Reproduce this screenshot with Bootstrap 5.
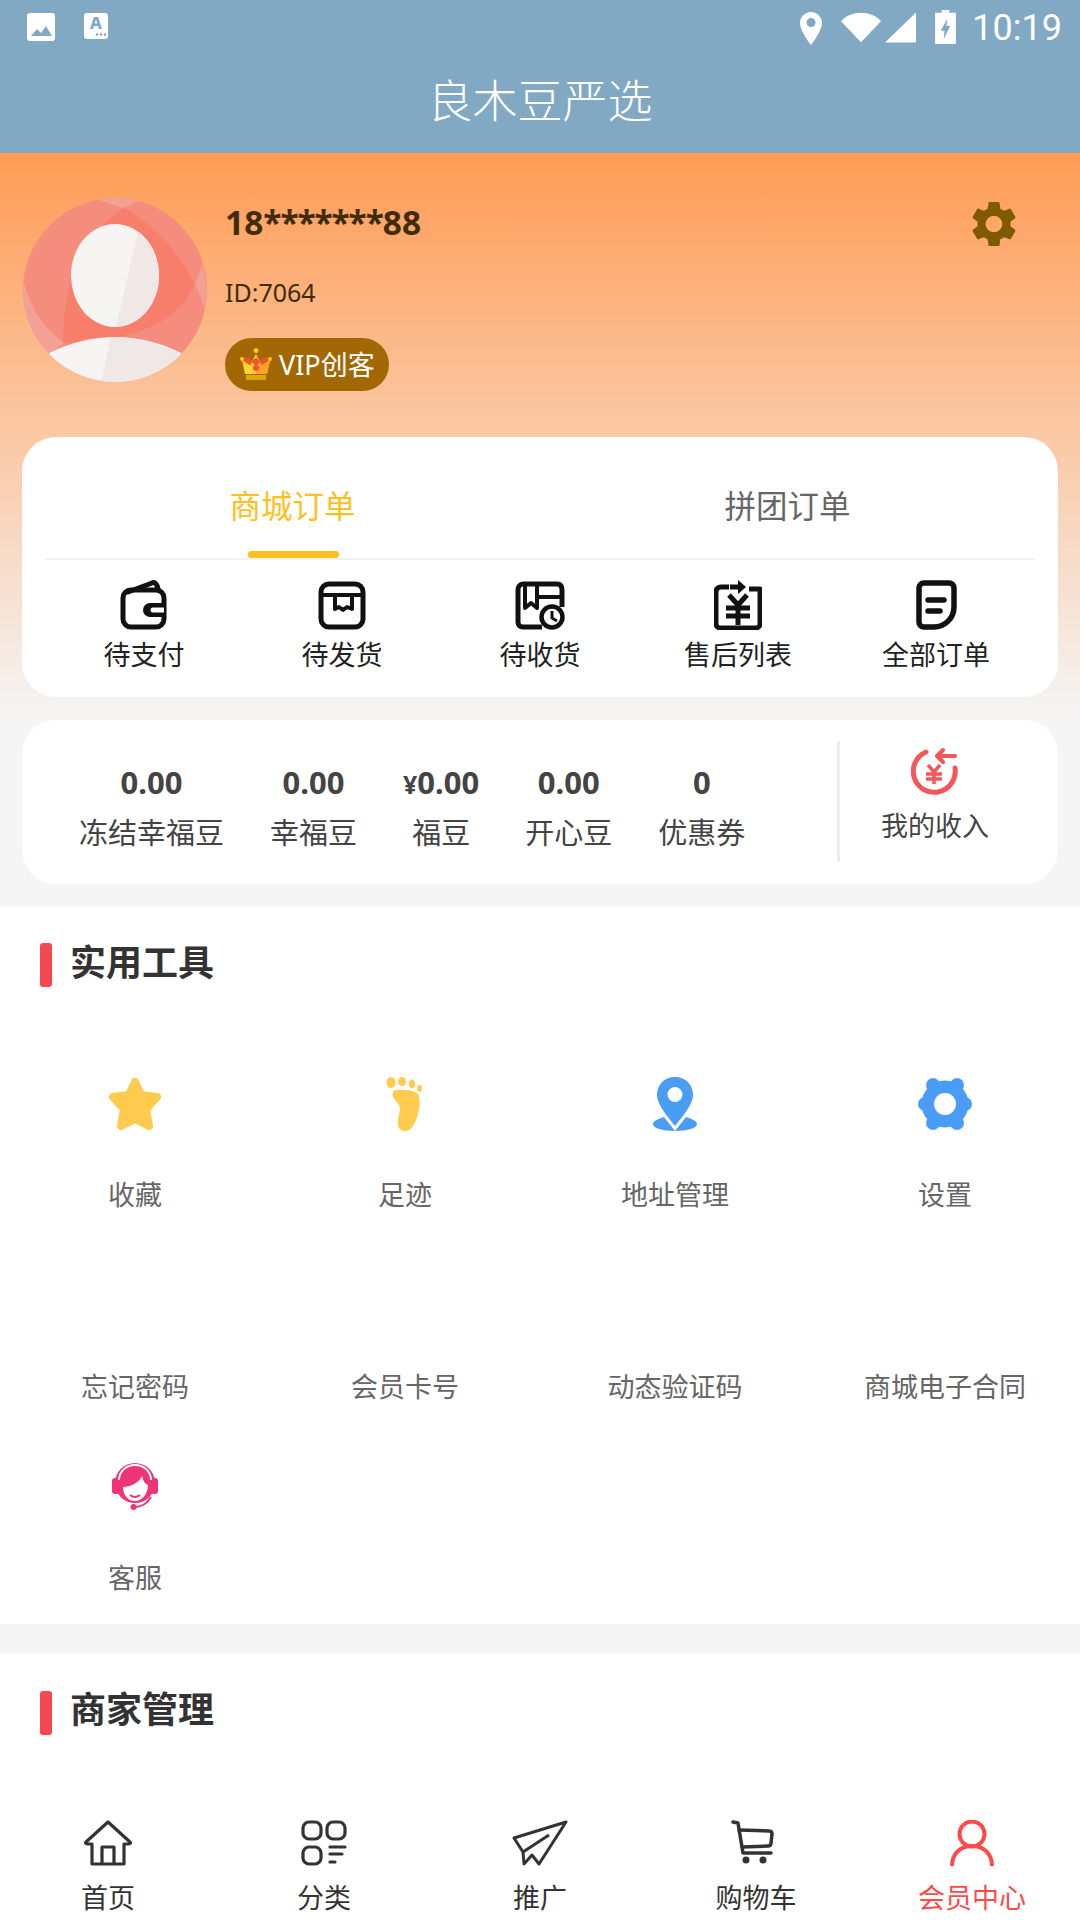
<!DOCTYPE html>
<html lang="zh">
<head>
<meta charset="utf-8">
<title>良木豆严选</title>
<link rel="stylesheet" href="https://cdn.jsdelivr.net/npm/bootstrap@5.3.0/dist/css/bootstrap.min.css">
<style>
body{font-family:"Noto Sans","Noto Sans CJK SC",sans-serif;background:#f5f5f5;color:#333;margin:0}
svg{display:block}
.app-frame{height:1920px;overflow:hidden}
.sys-bar{height:56px;background:#81a9c4;padding:12px 18px 0 27px;color:#fff}
.sys-left{gap:29px}
.sys-right{gap:19px}
.sys-pair{gap:4px}
.sys-time{font-family:Roboto,sans-serif;font-size:36px;line-height:36px;margin:-2px 0 0 -3px}
.sys-batt{margin-top:-2px}
.title-bar{height:97px;background:#81a9c4;color:#fff;font-size:45px;font-weight:300;padding-bottom:7px}
.hero-wrap{background:linear-gradient(180deg,#ff9c55 0,#f5f5f5 567px,#f5f5f5 100%);padding:45px 22px 23px}
.hero-row{margin-bottom:45px;height:194px}
.avatar-img{width:184px;height:184px;margin-left:1px;margin-right:18px}
.user-name{font-size:33.500px;font-weight:700;color:#3f2c08;line-height:48px}
.user-stars{letter-spacing:-1.100px}
.user-id{font-size:25px;color:#3f2c08;line-height:38px;margin-top:27px}
.vip-pill{height:53px;width:164px;border-radius:27px;background:#a16804;color:#fff;font-size:27px;line-height:53px;margin-top:27px;padding-left:15px;gap:7px}
.gear-top{margin:3px 41px 0 0}
.panel-white{background:#fff;border-radius:34px}
.order-panel{height:260px;padding:0 23px;margin-bottom:23px}
.tab-strip{height:123px;border-bottom:2px solid #f2f2f2}
.tab-item{font-size:31.500px;color:#666;position:relative;padding-top:16px}
.tab-on{color:#ffc01e}
.tab-on::after{content:"";position:absolute;left:50%;bottom:0;width:91px;height:7px;margin-left:-45px;background:#ffc01e;border-radius:3px}
.order-cell{font-size:27px;color:#222;line-height:36px;padding-top:20px}
.order-ico{height:50px;margin-bottom:7px}
.wallet-panel{height:164px;padding-left:57px}
.stat-list{gap:46px;width:760px;padding-top:10px}
.stat-val{font-size:31px;font-weight:700;color:#444;line-height:40px;height:40px;margin-bottom:11px}
.stat-yen{font-size:25px;line-height:1}
.stat-lab{font-size:29px;color:#444;line-height:40px}
.stat-sep{width:3px;height:120px;background:linear-gradient(90deg,#f7f7f7,#e4e4e4,#f7f7f7);margin-left:-2px}
.income-cell{font-size:27px;color:#444;line-height:36px;padding:0 28px 14px 0}
.income-cell svg{margin-bottom:13px}
.block-white{background:#fff}
.tools-block{padding:36px 0 24px;margin-bottom:29px}
.head-row{padding-left:40px;gap:18px;height:44px}
.head-bar{width:12px;height:44px;border-radius:3px;background:#f5484f}
.head-text{font-size:36px;font-weight:700;color:#333;padding-bottom:5px}
.tools-grid{margin-top:38px}
.tool-cell{height:191.500px;padding-top:50px;font-size:27px;color:#666}
.tool-ico{height:57px;margin-bottom:45px}
.tool-lab{line-height:36px}
.fill-white{flex:1 1 auto;min-height:0;background:#fff;padding-top:38px}
.tabbar{background:#fff;padding-top:45px;height:145px}
.tab-cell{font-size:27px;color:#333;line-height:36px}
.tab-cell svg{margin-bottom:14px}
.tab-cart svg{margin-right:9px}
.tab-live{color:#ff4a4a}
</style>
</head>
<body>
<div class="app-frame d-flex flex-column">

  <div class="sys-bar d-flex align-items-start justify-content-between flex-shrink-0">
    <div class="d-flex sys-left">
      <svg width="28" height="30" viewBox="0 0 28 30"><rect x="0" y="1" width="28" height="28" rx="3" fill="#fff"/><path d="M4 24l6-7 4 4 5-7 6 10z" fill="#81a9c4"/></svg>
      <svg width="24" height="27" viewBox="0 0 24 27"><rect x="0" y="1" width="24" height="26" rx="3" fill="#fff"/><path d="M6 17l4-12h4l4 12h-3l-1-3H10l-1 3zM10.800 11.500h2.400l-1.200-4z" fill="#81a9c4" fill-rule="evenodd"/><circle cx="13" cy="22.500" r="1.300" fill="#81a9c4"/><circle cx="17" cy="22.500" r="1.300" fill="#81a9c4"/><circle cx="21" cy="22.500" r="1.300" fill="#81a9c4"/></svg>
    </div>
    <div class="d-flex align-items-start sys-right">
      <svg width="22" height="33" viewBox="0 0 22 33"><path fill-rule="evenodd" d="M11 0C5 0 0 5 0 11c0 8 11 22 11 22s11-14 11-22C22 5 17 0 11 0zm0 15a4.500 4.500 0 1 1 0-9 4.500 4.500 0 0 1 0 9z" fill="#fff"/></svg>
      <div class="d-flex sys-pair">
        <svg width="40" height="31" viewBox="0 0 42 31"><path d="M0 9C5 3 13 0 21 0s16 3 21 9L21 31z" fill="#fff"/></svg>
        <svg width="31" height="31" viewBox="0 0 32 31"><path d="M32 0v31H0z" fill="#fff"/></svg>
      </div>
      <svg class="sys-batt" width="21" height="34" viewBox="0 0 22 36"><path fill-rule="evenodd" d="M7 0h8v3h7v33H0V3h7zM13 9l-7 13h4l-1 9 7-14h-4z" fill="#fff"/></svg>
      <div class="sys-time">10:19</div>
    </div>
  </div>

  <div class="title-bar d-flex align-items-center justify-content-center flex-shrink-0">良木豆严选</div>

  <div class="hero-wrap flex-shrink-0">
    <div class="hero-row d-flex">
      <svg class="avatar-img flex-shrink-0" viewBox="0 0 184 184">
        <defs><clipPath id="avClip"><circle cx="92" cy="92" r="92"/></clipPath></defs>
        <g clip-path="url(#avClip)">
          <rect width="184" height="184" fill="#f58d7e"/>
          <path d="M0 80Q10 125 42 145L20 160 0 140z" fill="#f3a196"/>
          <path d="M70 0L100 10 122 0z" fill="#f3a196"/>
          <path d="M172 87L180 66 184 90 184 125Q180 100 172 87z" fill="#f3a196"/>
          <path d="M100 10C130 25 158 55 172 87C155 120 125 142 40 145C40 95 52 45 100 10z" fill="#f87e6c"/>
          <ellipse cx="92" cy="77.500" rx="44" ry="51.500" fill="#f7f4f4"/>
          <path d="M115 33.500A44 51.500 0 0 1 92 129L93 129z" fill="#f0e8e7"/>
          <path d="M26 155Q92 123 158 155L170 184H14z" fill="#f7f4f4"/>
          <path d="M88 139Q130 140 158 155L170 184H78z" fill="#f0e8e7"/>
        </g>
      </svg>
      <div class="flex-grow-1">
        <div class="user-name">18<span class="user-stars">*******</span>88</div>
        <div class="user-id">ID:7064</div>
        <div class="vip-pill d-flex align-items-center">
          <svg width="32" height="33" viewBox="0 0 32 33" class="flex-shrink-0"><rect x="6" y="27" width="20" height="5" fill="#e0a800"/><path d="M5 26L2 12l8 5 6-11 6 11 8-5-3 14z" fill="#ffd22e"/><path d="M16 6l6 11 8-5-3 14H16z" fill="#ffa028"/><path d="M3 12c3-4 7-3 9 2l-2 3zM29 12c-3-4-7-3-9 2l2 3zM12 14c2-5 6-5 8 0l-4 4z" fill="#ef5230"/><circle cx="16" cy="20" r="3" fill="#ef5230"/><circle cx="16" cy="2.500" r="2.500" fill="#ffc61e"/><circle cx="2" cy="11" r="2" fill="#ffc61e"/><circle cx="30" cy="11" r="2" fill="#ffc61e"/></svg>
          <span>VIP创客</span>
        </div>
      </div>
      <svg class="gear-top flex-shrink-0" width="46" height="46" viewBox="2.500 2 19 20"><path fill="#7f5a00" d="M19.140 12.940c.04-.3.06-.61.06-.94 0-.32-.02-.64-.07-.94l2.030-1.580c.18-.14.23-.41.12-.61l-1.920-3.320c-.12-.22-.37-.29-.59-.22l-2.390.96c-.5-.38-1.030-.7-1.620-.94l-.36-2.540c-.04-.24-.24-.41-.48-.41h-3.840c-.24 0-.43.17-.47.41l-.36 2.540c-.59.24-1.130.57-1.620.94l-2.390-.96c-.22-.08-.47 0-.59.22L2.740 8.870c-.12.21-.08.47.12.61l2.030 1.580c-.05.3-.09.63-.09.94s.02.64.07.94l-2.030 1.580c-.18.14-.23.41-.12.61l1.920 3.320c.12.22.37.29.59.22l2.390-.96c.5.38 1.030.7 1.620.94l.36 2.540c.05.24.24.41.48.41h3.840c.24 0 .44-.17.47-.41l.36-2.540c.59-.24 1.130-.56 1.620-.94l2.390.96c.22.08.47 0 .59-.22l1.920-3.320c.12-.22.07-.47-.12-.61l-2.010-1.580zM12 15.600c-1.980 0-3.600-1.620-3.600-3.600s1.620-3.600 3.600-3.600 3.600 1.620 3.600 3.600-1.620 3.600-3.600 3.600z"/></svg>
    </div>

    <div class="panel-white order-panel">
      <div class="tab-strip row g-0">
        <div class="col-6 tab-item tab-on d-flex align-items-center justify-content-center">商城订单</div>
        <div class="col-6 tab-item d-flex align-items-center justify-content-center">拼团订单</div>
      </div>
      <div class="d-flex">
        <div class="order-cell flex-fill w-100 d-flex flex-column align-items-center">
          <svg class="order-ico" width="48" height="50" viewBox="0 0 48 50" fill="none" stroke="#111" stroke-width="5" stroke-linejoin="round"><path d="M8 12L32 3c2-1 5 0 6 6" stroke-linecap="round"/><rect x="3" y="10" width="41" height="37" rx="8"/><path d="M44 24H30a6 6 0 0 0 0 12h14z" fill="#111" stroke-width="2"/><path d="M44 27.500H33a2.500 2.500 0 0 0 0 5h11z" fill="#fff" stroke="none"/></svg>
          <span>待支付</span>
        </div>
        <div class="order-cell flex-fill w-100 d-flex flex-column align-items-center">
          <svg class="order-ico" width="48" height="50" viewBox="0 0 48 50" fill="none" stroke="#111" stroke-width="5" stroke-linejoin="round" stroke-linecap="round"><rect x="3" y="4" width="42" height="43" rx="8"/><path d="M3 15h11M45 15H34M14 15h20v14l-5-2-4 3-4-3-4 2V15z" stroke-width="4"/></svg>
          <span>待发货</span>
        </div>
        <div class="order-cell flex-fill w-100 d-flex flex-column align-items-center">
          <svg class="order-ico" width="50" height="50" viewBox="0 0 50 50" fill="none" stroke="#111" stroke-width="5" stroke-linejoin="round"><path d="M27 47H8c-3 0-5-2-5-5V10c0-3 2-6 5-6h34c3 0 5 2 5 6v17"/><path d="M10 4v24l6-5 6 5V4M22 17h25" stroke-width="4"/><circle cx="37" cy="37" r="10.500" stroke-width="4.500"/><path d="M37 31v7l5 3" stroke-width="3"/></svg>
          <span>待收货</span>
        </div>
        <div class="order-cell flex-fill w-100 d-flex flex-column align-items-center">
          <svg class="order-ico" width="48" height="50" viewBox="0 0 48 50" fill="none" stroke="#111" stroke-width="5" stroke-linejoin="round"><path d="M15 7H7C4 7 2 9 2 12v32c0 2 2 4 4 4h36c2 0 4-2 4-4V9H35"/><path d="M16 7h11" /><path d="M24 0l8 7-8 7z" fill="#111" stroke="none"/><path d="M15 15l9 10 9-10M12 28h24M12 36h24M24 25v20"/></svg>
          <span>售后列表</span>
        </div>
        <div class="order-cell flex-fill w-100 d-flex flex-column align-items-center">
          <svg class="order-ico" width="41" height="50" viewBox="0 0 41 50" fill="none" stroke="#111" stroke-width="5.500" stroke-linejoin="round" stroke-linecap="round"><path d="M8 3h25c3 0 5 2 5 5v19c0 11-9 20-20 20H8c-3 0-5-2-5-5V8c0-3 2-5 5-5z"/><path d="M12 20h16M12 31h12"/></svg>
          <span>全部订单</span>
        </div>
      </div>
    </div>

    <div class="panel-white wallet-panel d-flex align-items-center">
      <div class="stat-list d-flex text-center">
        <div><div class="stat-val">0.00</div><div class="stat-lab">冻结幸福豆</div></div>
        <div><div class="stat-val">0.00</div><div class="stat-lab">幸福豆</div></div>
        <div><div class="stat-val"><span class="stat-yen">¥</span>0.00</div><div class="stat-lab">福豆</div></div>
        <div><div class="stat-val">0.00</div><div class="stat-lab">开心豆</div></div>
        <div><div class="stat-val">0</div><div class="stat-lab">优惠券</div></div>
      </div>
      <div class="stat-sep flex-shrink-0"></div>
      <div class="income-cell flex-grow-1 d-flex flex-column align-items-center">
        <svg width="48" height="48" viewBox="0 0 48 48" fill="none" stroke="#f5565a" stroke-width="5" stroke-linecap="round"><path d="M15 5A21 21 0 1 0 44 21"/><path d="M27 9H44M32 3l-6 6 6 6" stroke-width="4" stroke-linejoin="round"/><path d="M17 18l6 7 6-7M15 27h16M15 32h16M23 25v12" stroke-width="3.500" stroke-linecap="butt"/></svg>
        <span>我的收入</span>
      </div>
    </div>
  </div>

  <div class="block-white tools-block flex-shrink-0">
    <div class="head-row d-flex align-items-center"><div class="head-bar"></div><div class="head-text">实用工具</div></div>
    <div class="tools-grid row g-0">
      <div class="col-3 tool-cell text-center"><div class="tool-ico d-flex justify-content-center align-items-center">
        <svg width="54" height="54" viewBox="0 0 54 54"><polygon points="27,5 33,18 49,20 38,32 41,49 27,42 13,49 16,32 5,20 21,18" fill="#ffcb4e" stroke="#ffcb4e" stroke-width="8" stroke-linejoin="round"/></svg></div><div class="tool-lab">收藏</div></div>
      <div class="col-3 tool-cell text-center"><div class="tool-ico d-flex justify-content-center align-items-center">
        <svg width="38" height="54" viewBox="0 0 38 54" fill="#ffcb4e"><ellipse cx="5" cy="5.500" rx="4.500" ry="5.500"/><ellipse cx="16" cy="4.500" rx="4" ry="4.500"/><ellipse cx="26" cy="7" rx="3" ry="4.500"/><ellipse cx="33.500" cy="11.500" rx="2.500" ry="3.500"/><path d="M10 13c7-1 16 0 21 3 4 4 3 16 0 24-2 6-5 14-12 14-6 0-8-5-7-11 1-6 3-11 1-15-3-4-8-9-6-12 0-2 1-3 3-3z"/></svg></div><div class="tool-lab">足迹</div></div>
      <div class="col-3 tool-cell text-center"><div class="tool-ico d-flex justify-content-center align-items-center">
        <svg width="44" height="54" viewBox="0 0 44 54"><path fill-rule="evenodd" fill="#4a9df5" d="M22 0C11 0 4 8 4 18c0 9 10 21 18 31 8-10 18-22 18-31C40 8 33 0 22 0zm0 25a7.500 7.500 0 1 1 0-15 7.500 7.500 0 0 1 0 15z"/><path fill="#4a9df5" d="M11 40C5 42 0 44 0 47c0 4 9 7 22 7s22-3 22-7c0-3-5-5-11-7l-11 14z"/></svg></div><div class="tool-lab">地址管理</div></div>
      <div class="col-3 tool-cell text-center"><div class="tool-ico d-flex justify-content-center align-items-center">
        <svg width="54" height="52" viewBox="0 0 54 52"><g fill="#4a9df5"><circle cx="27" cy="26" r="23.500"/><circle cx="15" cy="7" r="7"/><circle cx="39" cy="7" r="7"/><circle cx="7" cy="26" r="7"/><circle cx="47" cy="26" r="7"/><circle cx="15" cy="45" r="7"/><circle cx="39" cy="45" r="7"/></g><circle cx="27" cy="26" r="11" fill="#fff"/></svg></div><div class="tool-lab">设置</div></div>
      <div class="col-3 tool-cell text-center"><div class="tool-ico"></div><div class="tool-lab">忘记密码</div></div>
      <div class="col-3 tool-cell text-center"><div class="tool-ico"></div><div class="tool-lab">会员卡号</div></div>
      <div class="col-3 tool-cell text-center"><div class="tool-ico"></div><div class="tool-lab">动态验证码</div></div>
      <div class="col-3 tool-cell text-center"><div class="tool-ico"></div><div class="tool-lab">商城电子合同</div></div>
      <div class="col-3 tool-cell text-center"><div class="tool-ico d-flex justify-content-center align-items-center">
        <svg width="46" height="47" viewBox="0 0 46 47"><rect x="0" y="15" width="7" height="16" rx="3" fill="#ee3377"/><rect x="39" y="15" width="7" height="16" rx="3" fill="#ee3377"/><circle cx="23" cy="20" r="20" fill="#ee3377"/><path d="M7 17A16 15 0 0 1 39 17" fill="none" stroke="#fff" stroke-width="2"/><path d="M11 24C18 24 27 20 30 13C31 18 33 21 36 22C36 31 30 38 23 38C16 38 11 32 11 24z" fill="#fff"/><path d="M18 32Q23 36 28 32" fill="none" stroke="#ee3377" stroke-width="2"/><path d="M22 44c7 0 13-3 17-10" stroke="#ee3377" stroke-width="2" fill="none"/><circle cx="21.500" cy="44" r="3" fill="#ee3377"/></svg></div><div class="tool-lab">客服</div></div>
    </div>
  </div>

  <div class="fill-white">
    <div class="head-row d-flex align-items-center"><div class="head-bar"></div><div class="head-text">商家管理</div></div>
  </div>

  <div class="tabbar d-flex flex-shrink-0">
    <div class="tab-cell flex-fill w-100 d-flex flex-column align-items-center">
      <svg width="48" height="46" viewBox="0 0 48 46" fill="none" stroke="#333" stroke-width="3.200" stroke-linejoin="round"><path d="M8 24H4c-2 0-3-1-2-2L24 2l22 20c1 1 0 2-2 2h-4v20H8z"/><path d="M18 44V27h12v17"/></svg>
      <span>首页</span></div>
    <div class="tab-cell flex-fill w-100 d-flex flex-column align-items-center">
      <svg width="46" height="46" viewBox="0 0 46 46" fill="none" stroke="#333" stroke-width="3.200" stroke-linecap="round"><rect x="2" y="2" width="18" height="17" rx="6"/><rect x="26" y="2" width="18" height="17" rx="6"/><rect x="2" y="27" width="18" height="17" rx="6"/><path d="M29 27H44M29 34H41M29 42H34"/></svg>
      <span>分类</span></div>
    <div class="tab-cell flex-fill w-100 d-flex flex-column align-items-center">
      <svg width="56" height="46" viewBox="0 0 56 46" fill="none" stroke="#333" stroke-width="3" stroke-linejoin="round"><path d="M54 2L2 18l9 14 1 12 8-9 7 9z"/><path d="M37 15L11 32"/></svg>
      <span>推广</span></div>
    <div class="tab-cell tab-cart flex-fill w-100 d-flex flex-column align-items-center">
      <svg width="44" height="46" viewBox="0 0 44 46" fill="none" stroke="#333" stroke-width="3.500" stroke-linecap="round" stroke-linejoin="round"><path d="M3 2l5 1 5 30h28"/><path d="M9 10l30 1c2 0 3 1 3 3l-1 9c0 2-1 3-3 3l-26 1"/><circle cx="16" cy="40" r="3.500" fill="#333" stroke="none"/><circle cx="33" cy="40" r="3.500" fill="#333" stroke="none"/></svg>
      <span>购物车</span></div>
    <div class="tab-cell tab-live flex-fill w-100 d-flex flex-column align-items-center">
      <svg width="46" height="46" viewBox="0 0 46 46" fill="none" stroke="#ff4a4a" stroke-width="4"><circle cx="23" cy="14" r="12.500"/><path d="M3 46C3 34 11 26 23 26s20 8 20 20"/></svg>
      <span>会员中心</span></div>
  </div>
</div>
<script src="https://cdn.jsdelivr.net/npm/bootstrap@5.3.0/dist/js/bootstrap.bundle.min.js"></script>
</body>
</html>
